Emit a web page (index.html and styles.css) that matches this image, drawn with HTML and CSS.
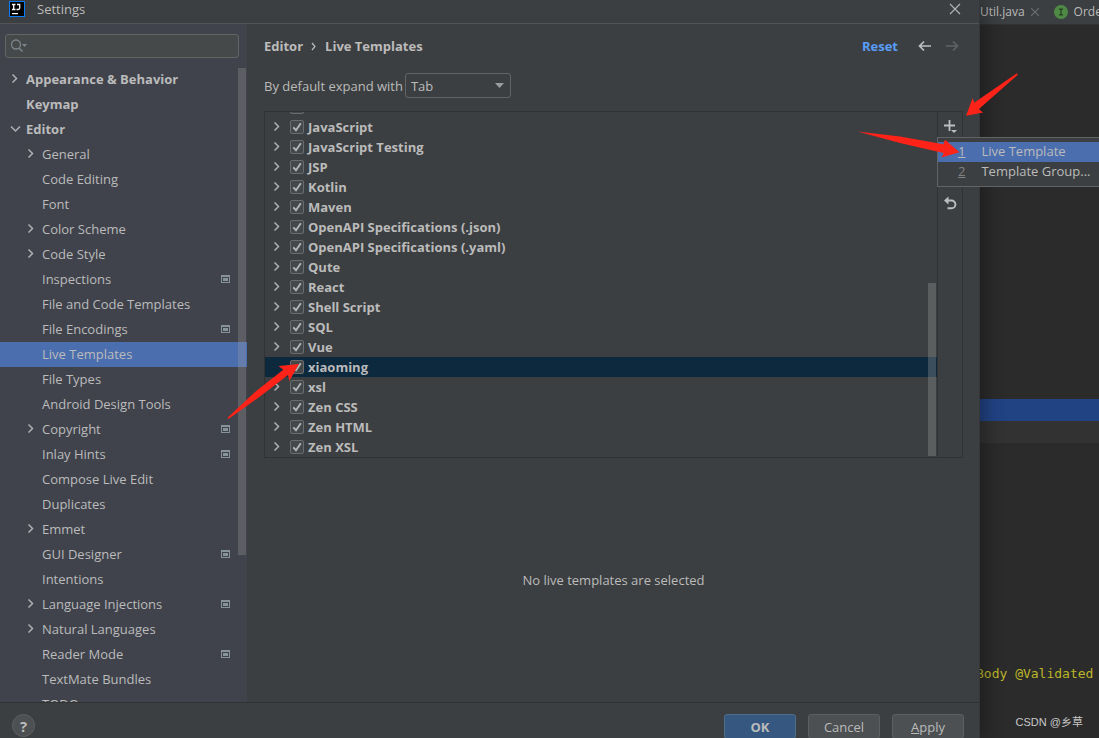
FILE: index.html
```html
<!DOCTYPE html>
<html lang="en">
<head>
<meta charset="utf-8">
<title>Settings</title>
<link rel="stylesheet" href="styles.css">
</head>
<body>
<svg class="defs" aria-hidden="true">
  <symbol id="chev" viewBox="0 0 16 16"><path d="M5.500 3.500 9.500 7.500l-4 4" fill="none" stroke="#adb0b3" stroke-width="1.500"/></symbol>
  <symbol id="down" viewBox="0 0 16 16"><path d="M4 5.500 8.500 10 13 5.500" fill="none" stroke="#adb0b3" stroke-width="1.500"/></symbol>
  <symbol id="proj" viewBox="0 0 9 8"><path d="M0 0h9v8H0zM1 2v5h7V2z" fill="#87939a" fill-rule="evenodd"/><path d="M2 3h5v3H2z" fill="#87939a"/></symbol>
  <symbol id="tick" viewBox="0 0 14 14"><path d="M3.300 7.300 6 10.200 10.800 3.300" fill="none" stroke="#b4b6b7" stroke-width="1.900"/></symbol>
</svg>
<div class="screen">
  <section class="dialog">
    <header class="titlebar">
      <svg class="logo" viewBox="0 0 16 16"><path d="M0 0h16v16H0z" fill="#087cfa"/><path d="M1 1h14v14H1z" fill="#000"/><path d="M3 3.500h3.500M4.700 3v5.500M3 8.500h3.500M8 3.500h2.700v3.600q0 1.400-1.400 1.400H7.500" stroke="#fff" stroke-width="1.300" fill="none"/><path d="M3 12h6v1.200H3z" fill="#fff"/></svg>
      <h1>Settings</h1>
      <button class="plain" aria-label="Close"><svg width="12" height="12" viewBox="0 0 12 12"><path d="m1 1 10 10M11 1 1 11" stroke="#b4b6b7" stroke-width="1.100"/></svg></button>
    </header>
    <div class="main">
      <aside class="sidebar">
        <div class="search">
          <svg width="18" height="14" viewBox="0 0 18 14"><circle cx="6" cy="5.500" r="4.500" fill="none" stroke="#7a858c" stroke-width="1.300"/><path d="m9 9 3.500 3.500" stroke="#7a858c" stroke-width="1.600"/><path d="M12 5h5l-2.500 3z" fill="#7a858c"/></svg>
          <input type="text" aria-label="Search settings">
        </div>
        <div class="nav">
          <ul>
            <li class="top"><svg class="ar"><use href="#chev"/></svg><span>Appearance &amp; Behavior</span></li>
            <li class="top"><i class="ar"></i><span>Keymap</span></li>
            <li class="top"><svg class="ar"><use href="#down"/></svg><span>Editor</span></li>
            <li><svg class="ar"><use href="#chev"/></svg><span>General</span></li>
            <li><i class="ar"></i><span>Code Editing</span></li>
            <li><i class="ar"></i><span>Font</span></li>
            <li><svg class="ar"><use href="#chev"/></svg><span>Color Scheme</span></li>
            <li><svg class="ar"><use href="#chev"/></svg><span>Code Style</span></li>
            <li><i class="ar"></i><span>Inspections</span><svg class="proj"><use href="#proj"/></svg></li>
            <li><i class="ar"></i><span>File and Code Templates</span></li>
            <li><i class="ar"></i><span>File Encodings</span><svg class="proj"><use href="#proj"/></svg></li>
            <li class="selected"><i class="ar"></i><span>Live Templates</span></li>
            <li><i class="ar"></i><span>File Types</span></li>
            <li><i class="ar"></i><span>Android Design Tools</span></li>
            <li><svg class="ar"><use href="#chev"/></svg><span>Copyright</span><svg class="proj"><use href="#proj"/></svg></li>
            <li><i class="ar"></i><span>Inlay Hints</span><svg class="proj"><use href="#proj"/></svg></li>
            <li><i class="ar"></i><span>Compose Live Edit</span></li>
            <li><i class="ar"></i><span>Duplicates</span></li>
            <li><svg class="ar"><use href="#chev"/></svg><span>Emmet</span></li>
            <li><i class="ar"></i><span>GUI Designer</span><svg class="proj"><use href="#proj"/></svg></li>
            <li><i class="ar"></i><span>Intentions</span></li>
            <li><svg class="ar"><use href="#chev"/></svg><span>Language Injections</span><svg class="proj"><use href="#proj"/></svg></li>
            <li><svg class="ar"><use href="#chev"/></svg><span>Natural Languages</span></li>
            <li><i class="ar"></i><span>Reader Mode</span><svg class="proj"><use href="#proj"/></svg></li>
            <li><i class="ar"></i><span>TextMate Bundles</span></li>
            <li><i class="ar"></i><span>TODO</span></li>
          </ul>
          <div class="nav-thumb"></div>
        </div>
      </aside>
      <main class="content">
        <div class="crumbs">
          <b>Editor</b>
          <svg width="6" height="9" viewBox="0 0 6 9"><path d="m1 1 3 3.500L1 8" fill="none" stroke="#bbb" stroke-width="1.200"/></svg>
          <b>Live Templates</b>
          <a href="#" class="reset">Reset</a>
          <button class="plain" aria-label="Back"><svg width="14" height="12" viewBox="0 0 14 12"><path d="M1.500 6H13M6 1.500 1.500 6 6 10.500" fill="none" stroke="#bcbec0" stroke-width="1.700"/></svg></button>
          <button class="plain" aria-label="Forward" disabled><svg width="14" height="12" viewBox="0 0 14 12"><path d="M1 6h11.500M8 1.500 12.500 6 8 10.500" fill="none" stroke="#606366" stroke-width="1.700"/></svg></button>
        </div>
        <div class="expand">
          <label for="key">By default expand with</label>
          <div class="combo"><select id="key"><option>Tab</option></select><svg width="9" height="5" viewBox="0 0 9 5"><path d="M0 0h9L4.500 5z" fill="#9a9da0"/></svg></div>
        </div>
        <div class="panel">
          <div class="groups">
            <div class="row"><i class="ar"></i><span class="box"><input type="checkbox" checked aria-label="Template group"></span></div>
            <div class="row"><svg class="ar"><use href="#chev"/></svg><label><span class="box"><input type="checkbox" checked><svg><use href="#tick"/></svg></span>JavaScript</label></div>
            <div class="row"><svg class="ar"><use href="#chev"/></svg><label><span class="box"><input type="checkbox" checked><svg><use href="#tick"/></svg></span>JavaScript Testing</label></div>
            <div class="row"><svg class="ar"><use href="#chev"/></svg><label><span class="box"><input type="checkbox" checked><svg><use href="#tick"/></svg></span>JSP</label></div>
            <div class="row"><svg class="ar"><use href="#chev"/></svg><label><span class="box"><input type="checkbox" checked><svg><use href="#tick"/></svg></span>Kotlin</label></div>
            <div class="row"><svg class="ar"><use href="#chev"/></svg><label><span class="box"><input type="checkbox" checked><svg><use href="#tick"/></svg></span>Maven</label></div>
            <div class="row"><svg class="ar"><use href="#chev"/></svg><label><span class="box"><input type="checkbox" checked><svg><use href="#tick"/></svg></span>OpenAPI Specifications (.json)</label></div>
            <div class="row"><svg class="ar"><use href="#chev"/></svg><label><span class="box"><input type="checkbox" checked><svg><use href="#tick"/></svg></span>OpenAPI Specifications (.yaml)</label></div>
            <div class="row"><svg class="ar"><use href="#chev"/></svg><label><span class="box"><input type="checkbox" checked><svg><use href="#tick"/></svg></span>Qute</label></div>
            <div class="row"><svg class="ar"><use href="#chev"/></svg><label><span class="box"><input type="checkbox" checked><svg><use href="#tick"/></svg></span>React</label></div>
            <div class="row"><svg class="ar"><use href="#chev"/></svg><label><span class="box"><input type="checkbox" checked><svg><use href="#tick"/></svg></span>Shell Script</label></div>
            <div class="row"><svg class="ar"><use href="#chev"/></svg><label><span class="box"><input type="checkbox" checked><svg><use href="#tick"/></svg></span>SQL</label></div>
            <div class="row"><svg class="ar"><use href="#chev"/></svg><label><span class="box"><input type="checkbox" checked><svg><use href="#tick"/></svg></span>Vue</label></div>
            <div class="row current"><i class="ar"></i><label><span class="box"><input type="checkbox" checked><svg><use href="#tick"/></svg></span>xiaoming</label></div>
            <div class="row"><svg class="ar"><use href="#chev"/></svg><label><span class="box"><input type="checkbox" checked><svg><use href="#tick"/></svg></span>xsl</label></div>
            <div class="row"><svg class="ar"><use href="#chev"/></svg><label><span class="box"><input type="checkbox" checked><svg><use href="#tick"/></svg></span>Zen CSS</label></div>
            <div class="row"><svg class="ar"><use href="#chev"/></svg><label><span class="box"><input type="checkbox" checked><svg><use href="#tick"/></svg></span>Zen HTML</label></div>
            <div class="row"><svg class="ar"><use href="#chev"/></svg><label><span class="box"><input type="checkbox" checked><svg><use href="#tick"/></svg></span>Zen XSL</label></div>
            <div class="groups-thumb"></div>
          </div>
          <div class="tools">
            <button class="plain" aria-label="Add"><svg width="14" height="14" viewBox="0 0 14 14"><path d="M1 6.500h11M6.500 1v11" stroke="#bcbec0" stroke-width="1.800"/><path d="M8 11h6l-3 3z" fill="#bcbec0"/></svg></button>
            <button class="plain" aria-label="Revert"><svg width="14" height="14" viewBox="0 0 14 14"><path d="M3 4.500h5.500a3.900 3.900 0 0 1 0 7.800H4.500" fill="none" stroke="#bcbec0" stroke-width="1.900"/><path d="M5.500 .5v8L1 4.500z" fill="#bcbec0"/></svg></button>
            <div class="popup">
              <button class="item active"><u>1</u><span>Live Template</span></button>
              <button class="item"><u>2</u><span>Template Group...</span></button>
            </div>
          </div>
        </div>
        <p class="empty">No live templates are selected</p>
      </main>
    </div>
    <footer class="footer">
      <button class="help" aria-label="Help">?</button>
      <button class="btn primary">OK</button>
      <button class="btn">Cancel</button>
      <button class="btn"><span><u>A</u>pply</span></button>
    </footer>
  </section>
  <section class="editor">
    <div class="tabs">
      <span>Util.java</span>
      <svg width="8" height="8" viewBox="0 0 8 8"><path d="m0 0 8 8M8 0 0 8" stroke="#6c6e70" stroke-width="1.100"/></svg>
      <svg class="iface" width="14" height="14" viewBox="0 0 14 14"><circle cx="7" cy="7" r="7" fill="#4f8a45"/><path d="M5 4.200h4M7 4v6M5 9.800h4" stroke="#243d22" stroke-width="1.200"/></svg>
      <span>Orde</span>
    </div>
    <div class="code">
      <div class="line hit"></div>
      <div class="line caret"></div>
      <div class="line text">Body @Validated</div>
    </div>
    <div class="watermark">CSDN @乡草</div>
  </section>
  <svg class="arrows" width="1099" height="738" viewBox="0 0 1099 738" aria-hidden="true">
    <g fill="#fe2318">
      <path d="M1016.500 73.500q1.500 0 1 1.500L978.700 109.300l4.500 3.200-17.200 3.200 6.700-17.700 1.500 4.700z"/>
      <path d="M857.500 131.500 900 136.500 943.300 144.300l1.700-4.600 14.500 12.600-18 5.200 2.200-4.500L900 143z"/>
      <path d="M227.500 417.800 255 392 283.300 369.700l-4.800-3.700 20.500-2-9.700 17-1.300-6-28 21.500L228.500 419z"/>
    </g>
  </svg>
</div>
</body>
</html>
```
FILE: styles.css
```css
* { box-sizing: border-box; }
body {
  margin: 0;
  background: #2b2b2b;
  color: #bbbbbb;
  font: 13px/20px "Open Sans", "Noto Sans", sans-serif;
}
button, input, select { font: inherit; color: inherit; }
svg { display: block; flex: none; }
.defs { position: absolute; width: 0; height: 0; }
.plain { display: flex; padding: 0; border: 0; background: none; }

.screen { position: relative; display: flex; height: 100vh; overflow: hidden; }
.dialog {
  position: relative;
  z-index: 1;
  flex: 1;
  min-width: 0;
  display: flex;
  flex-direction: column;
  background: #3c3f41;
  border-right: 1px solid #35383a;
  box-shadow: 2px 0 20px rgba(0, 0, 0, .4);
}
.titlebar {
  display: flex;
  align-items: center;
  height: 24px;
  padding: 0 18px 5px 9px;
  border-bottom: 1px solid #515355;
}
.logo { width: 16px; height: 16px; }
.titlebar h1 { flex: 1; margin: 0 0 0 12px; font-size: 13px; font-weight: 400; }
.main { flex: 1; min-height: 0; display: flex; }

.sidebar {
  width: 247px;
  display: flex;
  flex-direction: column;
  padding-top: 10px;
  background: #40434c;
}
.search {
  display: flex;
  align-items: center;
  height: 24px;
  margin: 0 8px 9px 5px;
  padding-left: 4px;
  background: #45494a;
  border: 1px solid #646464;
  border-radius: 3px;
}
.search input { flex: 1; min-width: 0; border: 0; background: none; outline: 0; }
.nav { position: relative; flex: 1; min-height: 0; overflow: hidden; }
.nav ul { margin: 0; padding: 0; list-style: none; }
.nav li { display: flex; align-items: center; height: 25px; padding: 0 17px 2px 23px; }
.nav li.top { padding-left: 7px; font-weight: 700; }
.nav li span { flex: 1; padding-left: 3px; }
.nav li.selected { background: #4b6eaf; }
.ar { flex: none; width: 16px; height: 16px; }
.proj { width: 9px; height: 8px; }
.nav-thumb {
  position: absolute;
  top: 1px;
  right: 1px;
  width: 8px;
  height: 487px;
  background: rgba(166, 166, 166, .28);
}

.content { flex: 1; min-width: 0; display: flex; flex-direction: column; padding: 12px 16px 0 17px; }
.crumbs { display: flex; align-items: center; gap: 8px; height: 20px; }
.reset { margin: 0 12px 0 auto; color: #589df6; font-weight: 700; text-decoration: none; }
.crumbs .plain + .plain { margin: 0 4px 0 5px; }
.expand { display: flex; align-items: center; gap: 2px; margin: 17px 0 13px; }
.combo { display: grid; align-items: center; width: 106px; height: 25px; }
.combo > * { grid-area: 1 / 1; }
.combo select {
  width: 100%;
  height: 25px;
  padding: 0 5px;
  appearance: none;
  background: #3c3f41;
  border: 1px solid #646464;
  border-radius: 3px;
}
.combo svg { justify-self: end; margin-right: 7px; pointer-events: none; }

.panel { display: flex; height: 347px; border: 1px solid #323232; }
.groups {
  position: relative;
  flex: 1;
  display: flex;
  flex-direction: column;
  justify-content: flex-end;
  overflow: hidden;
}
.row { flex: none; display: flex; align-items: center; gap: 5px; height: 20px; padding-left: 4px; font-weight: 700; }
.row.current { background: #0d293e; }
.row label { display: flex; align-items: center; gap: 4px; }
.box { display: grid; width: 14px; height: 14px; }
.box > * { grid-area: 1 / 1; }
.box svg { width: 14px; height: 14px; pointer-events: none; }
.box input {
  width: 14px;
  height: 14px;
  margin: 0;
  appearance: none;
  background: #43494a;
  border: 1px solid #6b6b6b;
  border-radius: 2px;
}
.groups-thumb {
  position: absolute;
  right: 1px;
  bottom: 1px;
  width: 8px;
  height: 173px;
  background: rgba(166, 166, 166, .3);
}
.tools {
  position: relative;
  width: 25px;
  display: flex;
  flex-direction: column;
  align-items: center;
  gap: 63px;
  padding-top: 7px;
  border-left: 1px solid #323232;
}
.popup {
  position: absolute;
  top: 25px;
  left: -1px;
  width: 180px;
  padding: 4px 0;
  background: #3c3f41;
  border: 1px solid #616365;
}
.item {
  display: flex;
  gap: 16px;
  width: 100%;
  height: 20px;
  padding: 0 0 0 20px;
  border: 0;
  background: none;
  line-height: 18px;
}
.item.active { background: #4b6eaf; }
.item:not(.active) u { color: #808284; }
.empty { margin: 112px 0 0; text-align: center; }

.footer {
  display: flex;
  gap: 12px;
  height: 36px;
  padding: 11px 15px 0 12px;
  border-top: 1px solid #323232;
}
.help {
  width: 23px;
  height: 23px;
  margin-right: auto;
  padding: 0;
  background: #4c5052;
  border: 1px solid #5e6060;
  border-radius: 50%;
  font-size: 15px;
  font-weight: 700;
  line-height: 20px;
}
.btn { width: 72px; height: 25px; padding: 0; background: #4c5052; border: 1px solid #5e6060; border-radius: 3px; }
.primary { background: #365880; border-color: #4c708c; font-weight: 700; }

.editor { position: relative; width: 119px; overflow: hidden; }
.tabs {
  display: flex;
  align-items: center;
  gap: 6px;
  height: 25px;
  padding-bottom: 1px;
  background: #3c3f41;
  border-bottom: 1px solid #323232;
  font-size: 12px;
  white-space: nowrap;
}
.iface { margin-left: 9px; }
.code { padding-top: 374px; }
.line { height: 22px; }
.hit { background: #214283; }
.caret { background: #323232; }
.text {
  margin: 220px 0 0 -4px;
  color: #bbb529;
  font: 13px/22px "DejaVu Sans Mono", monospace;
  white-space: nowrap;
}
.watermark {
  position: absolute;
  right: 16px;
  bottom: 6px;
  color: #c8c8c8;
  font: 11px/20px "Liberation Sans", "Noto Sans CJK SC", sans-serif;
}
.arrows { position: absolute; z-index: 2; top: 0; left: 0; pointer-events: none; }
```
